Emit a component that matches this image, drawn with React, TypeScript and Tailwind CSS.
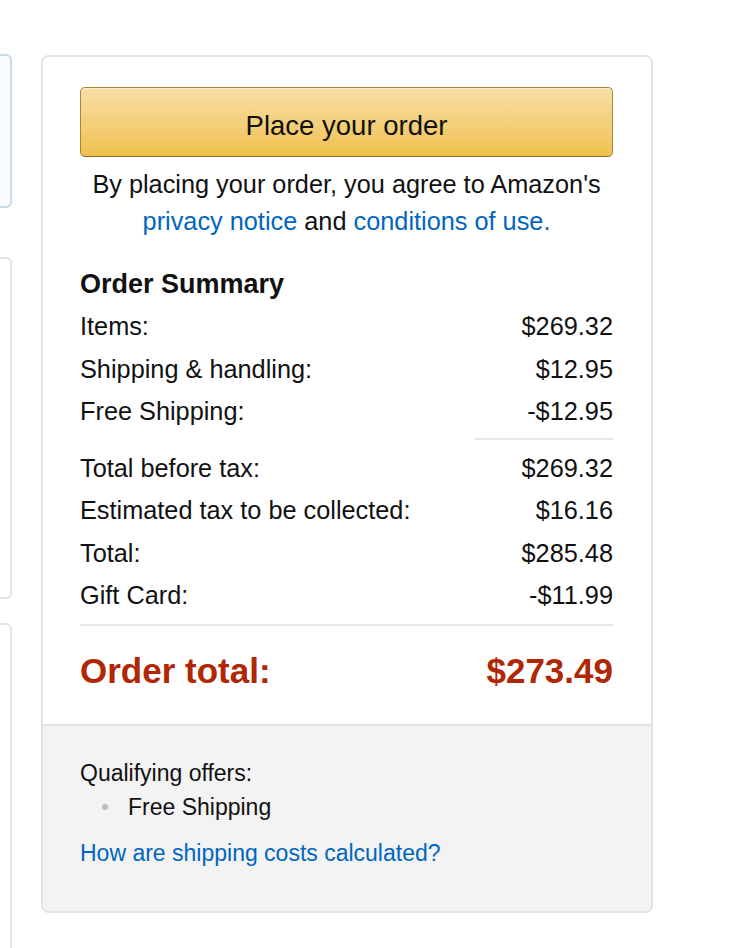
import React from 'react'

const rowsTop = [
  { label: 'Items:', value: '$269.32' },
  { label: 'Shipping & handling:', value: '$12.95' },
  { label: 'Free Shipping:', value: '-$12.95' }
]

const rowsBottom = [
  { label: 'Total before tax:', value: '$269.32' },
  { label: 'Estimated tax to be collected:', value: '$16.16' },
  { label: 'Total:', value: '$285.48' },
  { label: 'Gift Card:', value: '-$11.99' }
]

function Row({ label, value }: { label: string; value: string }) {
  return (
    <div className="flex items-center justify-between h-[42.5px] leading-[42.5px]">
      <span>{label}</span>
      <span>{value}</span>
    </div>
  )
}

export default function App() {
  return (
    <div
      className="h-[948px] overflow-hidden bg-white text-[#111] flex items-start pt-[54px]"
      style={{ fontFamily: '"Liberation Sans", Arial, sans-serif' }}
    >
      {/* cut-off left column */}
      <div className="w-[12px] shrink-0 flex flex-col">
        <div className="h-[154px] border-2 border-l-0 border-[#c6dce8] rounded-r-[6px] bg-[#fbfcfd]" />
        <div className="mt-[49px] h-[342px] border-2 border-l-0 border-[#e3e3e3] rounded-r-[6px]" />
        <div className="mt-[24px] h-[400px] border-2 border-l-0 border-[#e3e3e3] rounded-r-[6px]" />
      </div>

      <div className="ml-[29px] mt-[1px] w-[612px] shrink-0 border-2 border-[#e3e3e3] rounded-[8px] overflow-hidden">
        <div className="pl-[37px] pr-[38px] pt-[30px] pb-[33px] bg-white">
          <button className="w-full h-[70px] pt-[8px] rounded-[5px] border border-[#a88734] border-b-[#846a29] bg-gradient-to-b from-[#f7dfa5] to-[#f0c14b] shadow-[inset_0_1px_0_rgba(255,255,255,0.45)] text-[27.5px] text-[#111]">
            Place your order
          </button>
          <p className="mt-[9px] text-center text-[25.3px] leading-[37px]">
            By placing your order, you agree to Amazon's{' '}
            <a className="text-[#0066c0]">privacy notice</a> and{' '}
            <a className="text-[#0066c0]">conditions of use.</a>
          </p>

          <h3 className="mt-[25px] text-[27px] font-bold leading-[38px]">Order Summary</h3>
          <div className="text-[25.3px] pt-[2px]">
            {rowsTop.map(r => (
              <Row key={r.label} {...r} />
            ))}
            <div className="flex justify-end mt-[5px] mb-[7px]">
              <div className="w-[138px] h-[2px] bg-[#e7e7e7]" />
            </div>
            {rowsBottom.map(r => (
              <Row key={r.label} {...r} />
            ))}
            <div className="mt-[7px] h-[2px] bg-[#e7e7e7]" />
          </div>

          <div className="mt-[25px] flex items-center justify-between text-[35px] font-bold leading-[40px] text-[#b12704]">
            <span>Order total:</span>
            <span>$273.49</span>
          </div>
        </div>

        <div className="border-t-2 border-[#e3e3e3] bg-[#f3f3f3] pl-[37px] pr-[38px] pt-[30px] pb-[41px] text-[23px]">
          <div className="leading-[34px]">Qualifying offers:</div>
          <ul className="leading-[34px]">
            <li className="flex items-center">
              <span className="ml-[22px] w-[6px] h-[6px] rounded-full bg-[#bbb]" />
              <span className="ml-[20px]">Free Shipping</span>
            </li>
          </ul>
          <a className="block mt-[12px] leading-[34px] text-[#0066c0]">How are shipping costs calculated?</a>
        </div>
      </div>
    </div>
  )
}
